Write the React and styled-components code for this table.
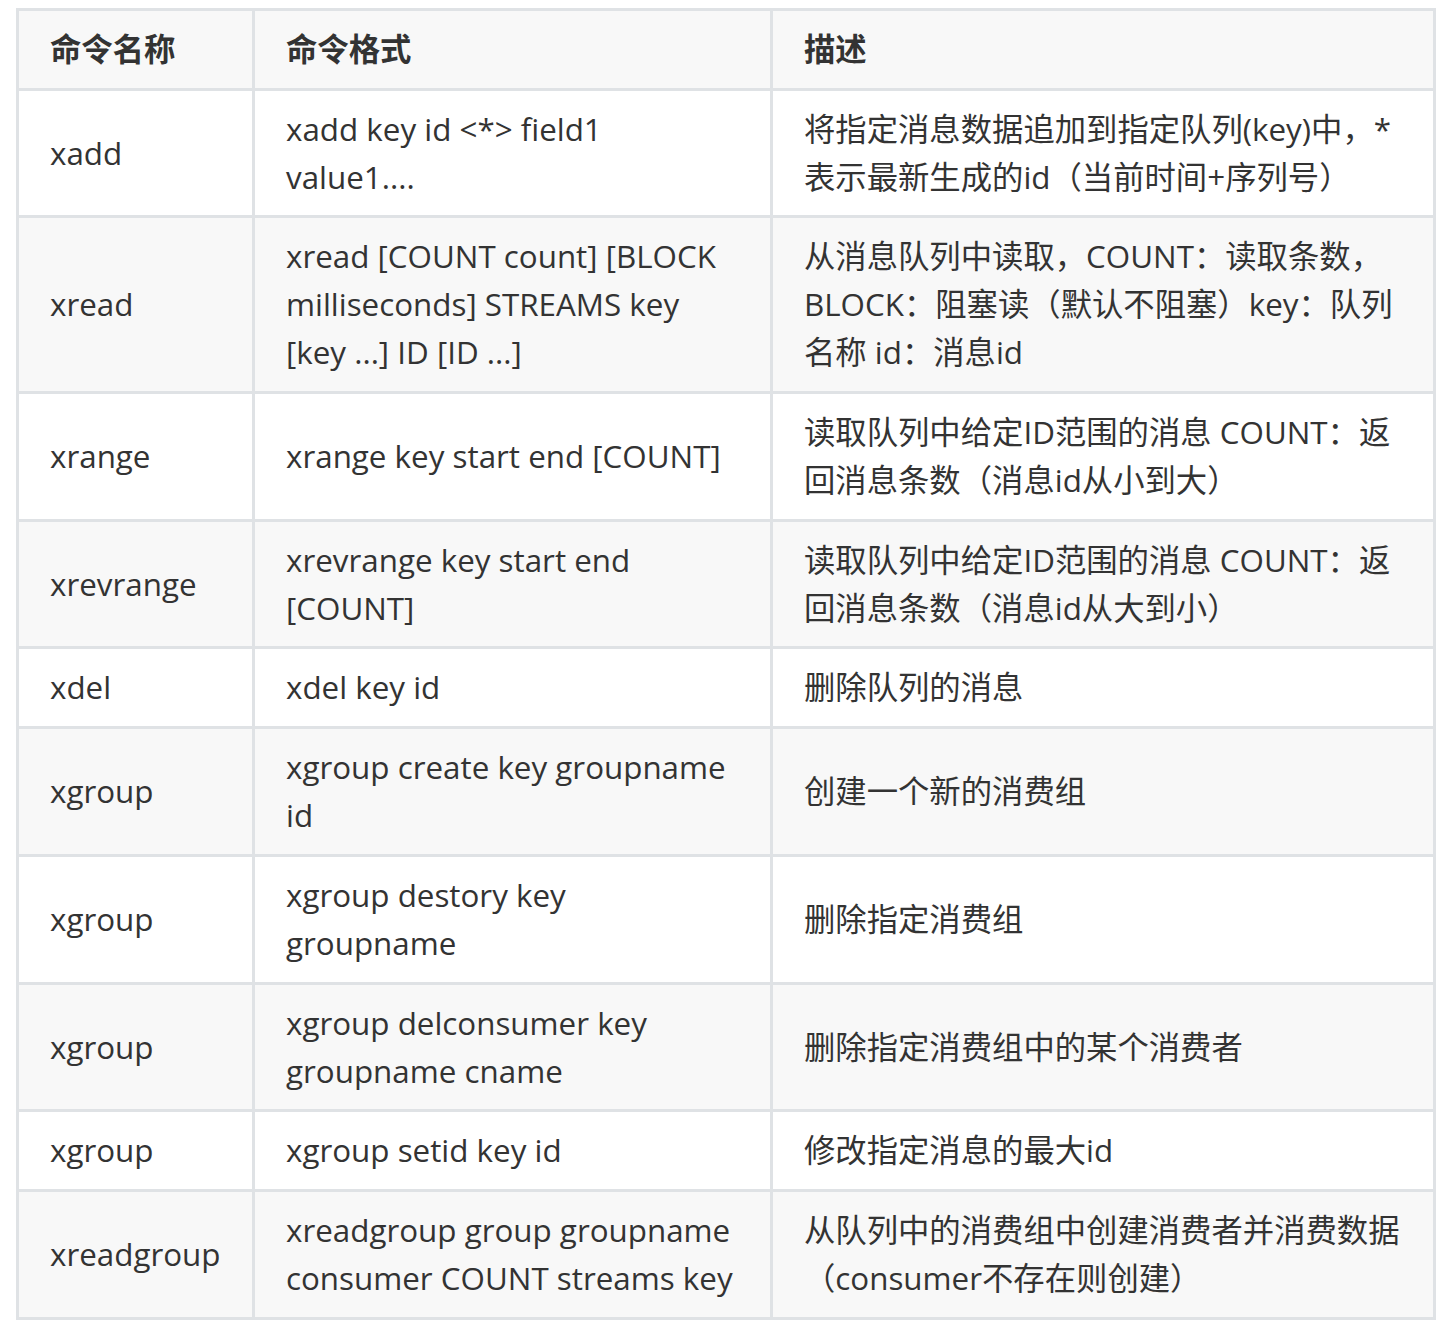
import React from "react";
import styled, { createGlobalStyle } from "styled-components";

const Global = createGlobalStyle`
  html, body { margin: 0; padding: 0; background: #ffffff; }
  body { font-family: "Open Sans", "Noto Sans CJK SC", sans-serif; color: #333333; }
`;

const Page = styled.div`
  padding: 8px 14px 0 16px;
`;

const Table = styled.table`
  width: 1417px;
  border-collapse: collapse;
  table-layout: fixed;
  font-size: 31.35px;
  line-height: 48px;
`;

const Col = styled.col`
  width: ${(p) => p.$w}px;
`;

const HeadRow = styled.tr`
  background: #f8f8f8;
`;

const Row = styled.tr`
  background: ${(p) => (p.$even ? "#f8f8f8" : "#ffffff")};
`;

const HeadCell = styled.th`
  border: 3px solid #dfe2e5;
  padding: 14px 31px 14.7px;
  text-align: left;
  font-weight: 700;
  white-space: nowrap;
`;

const Cell = styled.td`
  border: 3px solid #dfe2e5;
  padding: 14px 31px 14.7px;
  text-align: left;
  vertical-align: middle;
  white-space: nowrap;
`;

function Lines({ text }) {
  return text.split("|").map((line, i) => (
    <React.Fragment key={i}>
      {i > 0 && <br />}
      {line}
    </React.Fragment>
  ));
}

const rows = [
  ["xadd", "xadd key id <*> field1|value1....", "将指定消息数据追加到指定队列(key)中，*|表示最新生成的id（当前时间+序列号）"],
  ["xread", "xread [COUNT count] [BLOCK|milliseconds] STREAMS key|[key ...] ID [ID ...]", "从消息队列中读取，COUNT：读取条数，|BLOCK：阻塞读（默认不阻塞）key：队列|名称 id：消息id"],
  ["xrange", "xrange key start end [COUNT]", "读取队列中给定ID范围的消息 COUNT：返|回消息条数（消息id从小到大）"],
  ["xrevrange", "xrevrange key start end|[COUNT]", "读取队列中给定ID范围的消息 COUNT：返|回消息条数（消息id从大到小）"],
  ["xdel", "xdel key id", "删除队列的消息"],
  ["xgroup", "xgroup create key groupname|id", "创建一个新的消费组"],
  ["xgroup", "xgroup destory key|groupname", "删除指定消费组"],
  ["xgroup", "xgroup delconsumer key|groupname cname", "删除指定消费组中的某个消费者"],
  ["xgroup", "xgroup setid key id", "修改指定消息的最大id"],
  ["xreadgroup", "xreadgroup group groupname|consumer COUNT streams key", "从队列中的消费组中创建消费者并消费数据|（consumer不存在则创建）"],
];

export default function App() {
  return (
    <Page>
      <Global />
      <Table>
        <colgroup>
          <Col $w={236} />
          <Col $w={518} />
          <Col $w={663} />
        </colgroup>
        <thead>
          <HeadRow>
            <HeadCell>命令名称</HeadCell>
            <HeadCell>命令格式</HeadCell>
            <HeadCell>描述</HeadCell>
          </HeadRow>
        </thead>
        <tbody>
          {rows.map((r, i) => (
            <Row key={i} $even={i % 2 === 1}>
              <Cell>{r[0]}</Cell>
              <Cell>
                <Lines text={r[1]} />
              </Cell>
              <Cell>
                <Lines text={r[2]} />
              </Cell>
            </Row>
          ))}
        </tbody>
      </Table>
    </Page>
  );
}
